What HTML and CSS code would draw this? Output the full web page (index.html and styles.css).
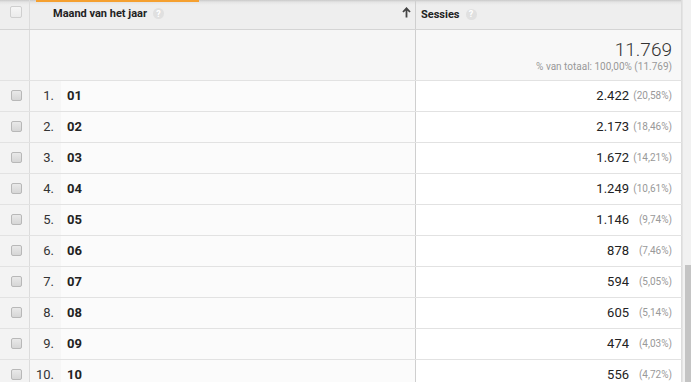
FILE: index.html
```html
<!DOCTYPE html>
<html lang="nl">
<head>
<meta charset="utf-8">
<title>Maand van het jaar</title>
<link rel="stylesheet" href="styles.css">
</head>
<body>
<div class="page">
  <div class="table">
    <div class="row head">
      <span class="tab-bar"></span>
      <div class="cell cb"><span class="box box-head"></span></div>
      <div class="cell dim dim-head">
        <span class="title">Maand van het jaar</span><span class="help">?</span>
        <svg class="sort" width="9" height="11" viewBox="0 0 9 11"><path d="M4.5 10.5V1.8M1 5L4.5 1.3 8 5" fill="none" stroke="#444" stroke-width="1.8"/></svg>
      </div>
      <div class="cell met met-head"><span class="title">Sessies</span><span class="help">?</span></div>
    </div>
    <div class="row total">
      <div class="cell cb"></div>
      <div class="cell dim"></div>
      <div class="cell met met-total">
        <div class="big">11.769</div>
        <div class="sub">% van totaal: 100,00% (11.769)</div>
      </div>
    </div>
    <div class="row data"><div class="cell cb"><span class="box"></span></div><div class="cell dim"><span class="idx">1.</span><span class="val">01</span></div><div class="cell met"><span class="num">2.422</span><span class="pct">(20,58%)</span></div></div>
    <div class="row data"><div class="cell cb"><span class="box"></span></div><div class="cell dim"><span class="idx">2.</span><span class="val">02</span></div><div class="cell met"><span class="num">2.173</span><span class="pct">(18,46%)</span></div></div>
    <div class="row data"><div class="cell cb"><span class="box"></span></div><div class="cell dim"><span class="idx">3.</span><span class="val">03</span></div><div class="cell met"><span class="num">1.672</span><span class="pct">(14,21%)</span></div></div>
    <div class="row data"><div class="cell cb"><span class="box"></span></div><div class="cell dim"><span class="idx">4.</span><span class="val">04</span></div><div class="cell met"><span class="num">1.249</span><span class="pct">(10,61%)</span></div></div>
    <div class="row data"><div class="cell cb"><span class="box"></span></div><div class="cell dim"><span class="idx">5.</span><span class="val">05</span></div><div class="cell met"><span class="num">1.146</span><span class="pct">(9,74%)</span></div></div>
    <div class="row data"><div class="cell cb"><span class="box"></span></div><div class="cell dim"><span class="idx">6.</span><span class="val">06</span></div><div class="cell met"><span class="num">878</span><span class="pct">(7,46%)</span></div></div>
    <div class="row data"><div class="cell cb"><span class="box"></span></div><div class="cell dim"><span class="idx">7.</span><span class="val">07</span></div><div class="cell met"><span class="num">594</span><span class="pct">(5,05%)</span></div></div>
    <div class="row data"><div class="cell cb"><span class="box"></span></div><div class="cell dim"><span class="idx">8.</span><span class="val">08</span></div><div class="cell met"><span class="num">605</span><span class="pct">(5,14%)</span></div></div>
    <div class="row data"><div class="cell cb"><span class="box"></span></div><div class="cell dim"><span class="idx">9.</span><span class="val">09</span></div><div class="cell met"><span class="num">474</span><span class="pct">(4,03%)</span></div></div>
    <div class="row data"><div class="cell cb"><span class="box"></span></div><div class="cell dim"><span class="idx">10.</span><span class="val">10</span></div><div class="cell met"><span class="num">556</span><span class="pct">(4,72%)</span></div></div>
  </div>
  <div class="scrollbar"><div class="track"></div><div class="thumb"></div></div>
</div>
</body>
</html>
```
FILE: styles.css
```css
* { box-sizing: border-box; }
html, body { margin: 0; padding: 0; background: #fff; }
body {
  font-family: Roboto, "Liberation Sans", Arial, sans-serif;
  color: #222;
  overflow: hidden;
}
.page {
  display: flex;
  width: 691px;
  height: 382px;
}
.table {
  width: 682px;
  flex: none;
}
.row {
  display: grid;
  grid-template-columns: 30px 386px 266px;
  border-bottom: 1px solid #e2e2e2;
}
.cell {
  border-right: 1px solid #dcdcdc;
}
.cell.dim { border-right-color: #cfcfcf; }
.cb {
  background: #f3f3f3;
  display: flex;
  justify-content: center;
  padding-left: 3px;
  align-items: center;
}

/* header */
.head {
  position: relative;
  height: 30px;
  background: linear-gradient(#c9c9c9 0, #e4e4e4 2px, #eeeeee 5px, #eeeeee);
  border-bottom-color: #d4d4d4;
}
.head .cell { background: transparent; }
.tab-bar {
  position: absolute;
  left: 36px;
  top: 0;
  width: 163px;
  height: 2px;
  background: #f5a030;
}
.head .cb { align-items: flex-start; padding-top: 6px; }
.title {
  font-size: 11px;
  font-weight: 700;
  color: #222;
}
.help {
  display: inline-flex;
  align-items: center;
  justify-content: center;
  width: 11px;
  height: 11px;
  border-radius: 50%;
  background: #e0e0e0;
  color: #fff;
  font-size: 9px;
  font-weight: 700;
  margin-left: 6px;
  vertical-align: 0;
}
.dim-head {
  display: flex;
  align-items: center;
  padding-left: 23px;
  padding-right: 4px;
  padding-bottom: 2px;
}
.sort { margin-left: auto; margin-top: -3px; }
.met-head {
  display: flex;
  align-items: center;
  padding-left: 5px;
  padding-bottom: 1px;
}

/* checkbox */
.box {
  display: block;
  width: 11px;
  height: 11px;
  border: 1px solid #b8b8b8;
  border-radius: 2px;
  background: linear-gradient(#e9e9e9, #d6d6d6);
}
.box-head {
  width: 12px;
  height: 12px;
  border-color: #cfcfcf;
  background: linear-gradient(#f6f6f6, #ebebeb);
}

/* totals */
.total { height: 51px; }
.total .cb { background: #f2f2f2; }
.total .dim { background: #f6f6f6; }
.met-total {
  background: #f8f8f8;
  text-align: right;
  padding: 9px 9px 0 0;
}
.big {
  font-size: 19px;
  font-weight: 300;
  color: #333;
  line-height: 21px;
}
.sub {
  font-size: 10px;
  color: #999;
  line-height: 12px;
  margin-top: 1px;
}

/* data rows */
.data { height: 31px; }
.data .cell { padding-bottom: 1px; }
.data .dim {
  display: grid;
  grid-template-columns: 31px 1fr;
  align-items: stretch;
  padding-bottom: 0;
}
.idx {
  background: #f6f6f6;
  font-size: 13px;
  color: #333;
  text-align: right;
  padding-right: 7px;
  padding-bottom: 1px;
  display: flex;
  align-items: center;
  justify-content: flex-end;
}
.val {
  background: #fbfbfb;
  font-size: 13px;
  font-weight: 700;
  color: #222;
  padding-left: 6px;
  padding-bottom: 1px;
  display: flex;
  align-items: center;
}
.data .met {
  display: flex;
  align-items: center;
  justify-content: flex-end;
  padding-right: 9px;
  background: #fff;
}
.num {
  font-size: 13px;
  color: #222;
}
.pct {
  width: 43px;
  text-align: right;
  font-size: 10px;
  color: #999;
}

/* scrollbar */
.scrollbar {
  flex: 1;
  display: flex;
  flex-direction: column;
  background: #f1f1f1;
  border-left: 1px solid #e4e4e4;
}
.track { height: 265px; flex: none; }
.thumb {
  flex: 1;
  margin-left: 2px;
  background: #c4c4c4;
}
```
